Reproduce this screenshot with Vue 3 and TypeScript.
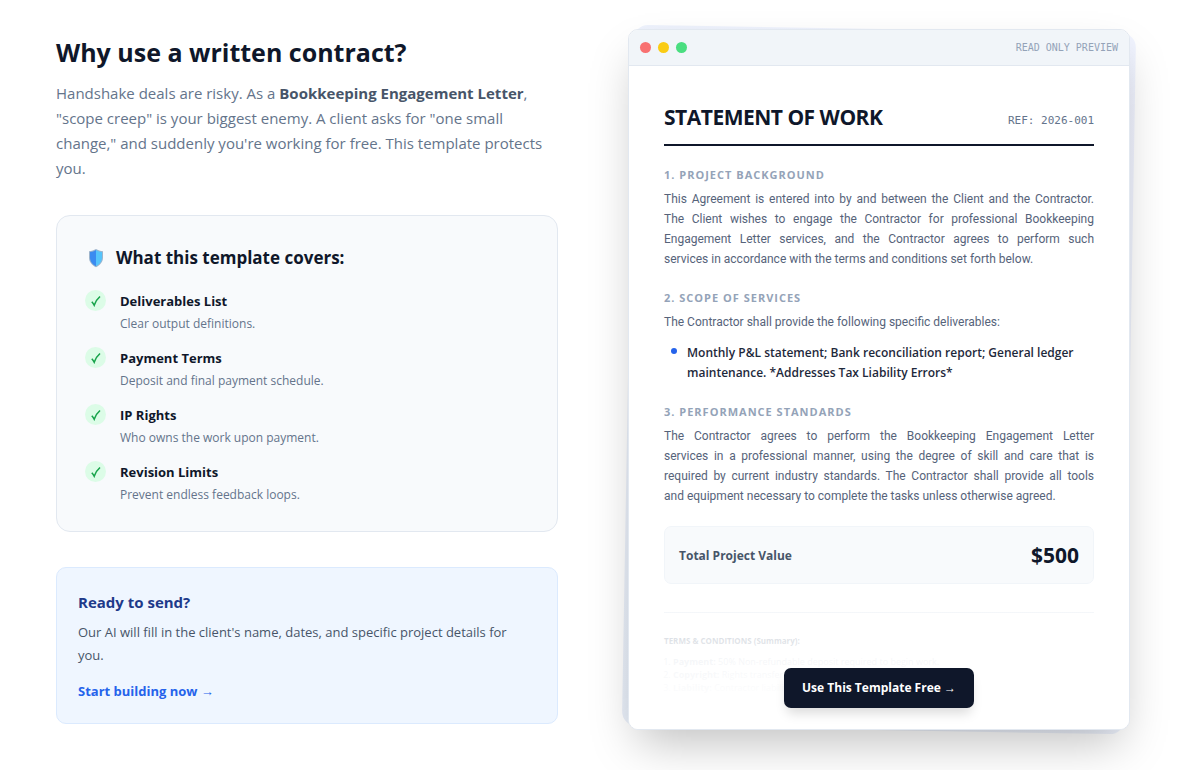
<script setup lang="ts">
interface Cover {
  title: string
  text: string
}

const covers: Cover[] = [
  { title: 'Deliverables List', text: 'Clear output definitions.' },
  { title: 'Payment Terms', text: 'Deposit and final payment schedule.' },
  { title: 'IP Rights', text: 'Who owns the work upon payment.' },
  { title: 'Revision Limits', text: 'Prevent endless feedback loops.' },
]
</script>

<template>
  <main class="page">
    <section class="intro">
      <h2 class="headline">Why use a written contract?</h2>
      <p class="lead">
        Handshake deals are risky. As a <strong>Bookkeeping Engagement Letter</strong>, "scope creep" is your biggest
        enemy. A client asks for "one small change," and suddenly you're working for free. This template protects you.
      </p>

      <div class="covers">
        <h3 class="covers-title">
          <svg class="shield" viewBox="0 0 16 20" aria-hidden="true">
            <path d="M8 1 C10 2.300 12.500 3 15 3.200 V9.500 C15 14 12 17.300 8 19.300 C4 17.300 1 14 1 9.500 V3.200 C3.500 3 6 2.300 8 1 Z" fill="#9db4cc" />
            <path d="M8 2 C6.200 3.200 4 3.900 2 4.100 V9.500 C2 13.500 4.500 16.400 8 18.200 Z" fill="#3b8bf0" />
            <path d="M8 2 C9.800 3.200 12 3.900 14 4.100 V9.500 C14 13.500 11.500 16.400 8 18.200 Z" fill="#56c4fb" />
          </svg>
          What this template covers:
        </h3>
        <ul class="cover-list">
          <li v-for="item in covers" :key="item.title" class="cover">
            <span class="tick">
              <svg viewBox="0 0 12 12" aria-hidden="true">
                <path d="M1.800 6.800 C2.800 7.800 3.500 8.800 4.200 10.200 C5.600 6.500 7.500 3.600 10 1.500" />
              </svg>
            </span>
            <div>
              <strong class="cover-name">{{ item.title }}</strong>
              <p class="cover-text">{{ item.text }}</p>
            </div>
          </li>
        </ul>
      </div>

      <div class="ready">
        <h3 class="ready-title">Ready to send?</h3>
        <p class="ready-text">Our AI will fill in the client's name, dates, and specific project details for you.</p>
        <a class="ready-link" href="#build">Start building now →</a>
      </div>
    </section>

    <section class="preview">
      <div class="backdrop"></div>
      <article class="sheet">
        <header class="bar">
          <span class="dots"><i class="dot red"></i><i class="dot yellow"></i><i class="dot green"></i></span>
          <span class="bar-label">READ ONLY PREVIEW</span>
        </header>
        <div class="doc">
          <div class="doc-head">
            <h1 class="doc-title">STATEMENT OF WORK</h1>
            <span class="doc-ref">REF: 2026-001</span>
          </div>

          <h4 class="label">1. PROJECT BACKGROUND</h4>
          <p class="text">
            This Agreement is entered into by and between the Client and the Contractor. The Client wishes to engage the
            Contractor for professional Bookkeeping Engagement Letter services, and the Contractor agrees to perform such
            services&nbsp;in accordance with the terms and conditions set forth below.
          </p>

          <h4 class="label">2. SCOPE OF SERVICES</h4>
          <p class="text">The Contractor shall provide the following specific deliverables:</p>
          <ul class="deliverables">
            <li>
              Monthly P&amp;L statement; Bank reconciliation report; General ledger maintenance. *Addresses Tax
              Liability Errors*
            </li>
          </ul>

          <h4 class="label">3. PERFORMANCE STANDARDS</h4>
          <p class="text">
            The Contractor agrees to perform the Bookkeeping Engagement Letter services&nbsp;in a professional manner,
            using the degree of skill and care that is required by current industry standards. The Contractor shall
            provide all tools and&nbsp;equipment necessary to complete the tasks unless otherwise agreed.
          </p>

          <div class="total">
            <span class="total-name">Total Project Value</span>
            <span class="total-value">$500</span>
          </div>

          <div class="terms">
            <h5 class="terms-title">TERMS &amp; CONDITIONS (Summary):</h5>
            <ol class="terms-list">
              <li><b>Payment:</b> 50% Non-refundable deposit required to begin work.</li>
              <li><b>Copyright:</b> Rights transfer to Client upon full payment.</li>
              <li><b>Liability:</b> Contractor liability limited to project value.</li>
            </ol>
          </div>
        </div>
        <div class="fade">
          <button class="use" type="button">Use This Template Free →</button>
        </div>
      </article>
    </section>
  </main>
</template>

<style>
body {
  margin: 0;
  background: #fff;
}
</style>

<style scoped>
.page {
  display: grid;
  grid-template-columns: minmax(0, 1fr) minmax(0, 1fr);
  align-items: start;
  gap: 70px;
  padding: 29px 70px 40px 56px;
  overflow: hidden;
  font-family: 'Open Sans', 'Noto Sans', sans-serif;
  color: #0f172a;
}

h1,
h2,
h3,
h4,
h5,
p,
ul,
ol {
  margin: 0;
  padding: 0;
}

ul,
ol {
  list-style: none;
}

.headline {
  padding-top: 3px;
  font-size: 25px;
  line-height: 40px;
  font-weight: 700;
}

.lead {
  margin-top: 9px;
  font-size: 15px;
  line-height: 25px;
  color: #64748b;
}

.lead strong {
  color: #475569;
}

.covers {
  margin-top: 34px;
  padding: 28px 28px 26px;
  border: 1px solid #e2e8f0;
  border-radius: 14px;
  background: #f8fafc;
}

.covers-title {
  display: flex;
  align-items: center;
  gap: 12px;
  padding-left: 3px;
  font-size: 17px;
  line-height: 28px;
}

.shield {
  width: 16px;
  height: 20px;
}

.cover-list {
  display: grid;
  gap: 13px;
  margin-top: 18px;
}

.cover {
  display: flex;
  gap: 14px;
}

.tick {
  display: flex;
  flex: none;
  align-items: center;
  justify-content: center;
  width: 21px;
  height: 21px;
  border-radius: 50%;
  background: #dcfce7;
}

.tick svg {
  width: 12px;
  height: 12px;
  fill: none;
  stroke: #16a34a;
  stroke-width: 1.6;
}

.cover-name {
  display: block;
  font-size: 13px;
  line-height: 22px;
}

.cover-text {
  margin-top: 1px;
  font-size: 12px;
  line-height: 21px;
  color: #64748b;
}

.ready {
  margin-top: 35px;
  padding: 21px;
  border: 1px solid #dbeafe;
  border-radius: 10px;
  background: #eff6ff;
}

.ready-title {
  font-size: 15px;
  line-height: 26px;
  color: #1e3a8a;
}

.ready-text {
  margin-top: 6px;
  padding-right: 10px;
  font-size: 13px;
  line-height: 23px;
  color: #475569;
}

.ready-link {
  display: block;
  margin-top: 13px;
  font-size: 13px;
  line-height: 22px;
  font-weight: 700;
  color: #2563eb;
  text-decoration: none;
}

.preview {
  position: relative;
}

.backdrop {
  position: absolute;
  inset: 0;
  border-radius: 14px;
  background: linear-gradient(45deg, #e9eff9, #f1f4ff);
  transform: rotate(1deg);
}

.sheet {
  position: relative;
  border: 1px solid #e2e8f0;
  border-radius: 10px;
  overflow: hidden;
  background: #fff;
  box-shadow: 0 22px 44px -10px rgba(0, 0, 0, 0.25);
}

.bar {
  display: flex;
  align-items: center;
  justify-content: space-between;
  height: 35px;
  padding: 0 11px;
  border-bottom: 1px solid #e2e8f0;
  background: #f1f5f9;
}

.dots {
  display: flex;
  gap: 7px;
}

.dot {
  width: 11px;
  height: 11px;
  border-radius: 50%;
}

.red {
  background: #f87171;
}

.yellow {
  background: #facc15;
}

.green {
  background: #4ade80;
}

.bar-label,
.doc-ref {
  font-family: 'DejaVu Sans Mono', monospace;
  color: #94a3b8;
  font-size: 10px;
}

.doc {
  padding: 36px 35px 35px;
}

.doc-head {
  display: flex;
  align-items: flex-end;
  justify-content: space-between;
  padding-bottom: 11px;
  border-bottom: 2px solid #0f172a;
}

.doc-title {
  font-size: 21px;
  line-height: 31px;
  letter-spacing: -0.5px;
}

.doc-ref {
  font-size: 11px;
  line-height: 24px;
  color: #64748b;
}

.label {
  margin-top: 20px;
  font-size: 11px;
  line-height: 18px;
  letter-spacing: 1px;
  color: #94a3b8;
}

.text {
  margin-top: 5px;
  font-family: Roboto, 'Open Sans', sans-serif;
  font-size: 12px;
  line-height: 20px;
  text-align: justify;
  color: #56637a;
}

.deliverables {
  margin-top: 11px;
}

.deliverables li {
  position: relative;
  padding-left: 23px;
  font-size: 12px;
  line-height: 20px;
  font-weight: 600;
  color: #1e293b;
}

.deliverables li::before {
  content: '';
  position: absolute;
  top: 5px;
  left: 7px;
  width: 6px;
  height: 6px;
  border-radius: 50%;
  background: #2563eb;
}

.total {
  display: flex;
  align-items: center;
  justify-content: space-between;
  margin-top: 20px;
  padding: 13px 14px;
  border: 1px solid #f1f5f9;
  border-radius: 7px;
  background: #f8fafc;
}

.total-name {
  font-size: 12px;
  font-weight: 700;
  color: #475569;
}

.total-value {
  font-size: 21px;
  line-height: 30px;
  font-weight: 700;
}

.terms {
  margin-top: 28px;
  padding-top: 20px;
  border-top: 1px solid #e2e8f0;
  font-size: 9px;
  line-height: 13px;
  color: #94a3b8;
}

.terms-title {
  font-size: 8px;
  line-height: 16px;
  color: #64748b;
}

.terms-list {
  margin-top: 6px;
  padding-left: 9px;
  list-style: decimal;
}

.fade {
  position: absolute;
  inset: auto 0 0;
  display: flex;
  align-items: flex-end;
  justify-content: center;
  height: 119px;
  padding-bottom: 21px;
  background: linear-gradient(to top, #fff 15%, rgba(255, 255, 255, 0.9) 50%, rgba(255, 255, 255, 0.5));
}

.use {
  padding: 0 18px;
  border: 0;
  border-radius: 7px;
  background: #0f172a;
  color: #fff;
  font: 700 12px/40px 'Open Sans', 'Noto Sans', sans-serif;
  box-shadow: 0 8px 12px -3px rgba(0, 0, 0, 0.15);
  cursor: pointer;
}
</style>
